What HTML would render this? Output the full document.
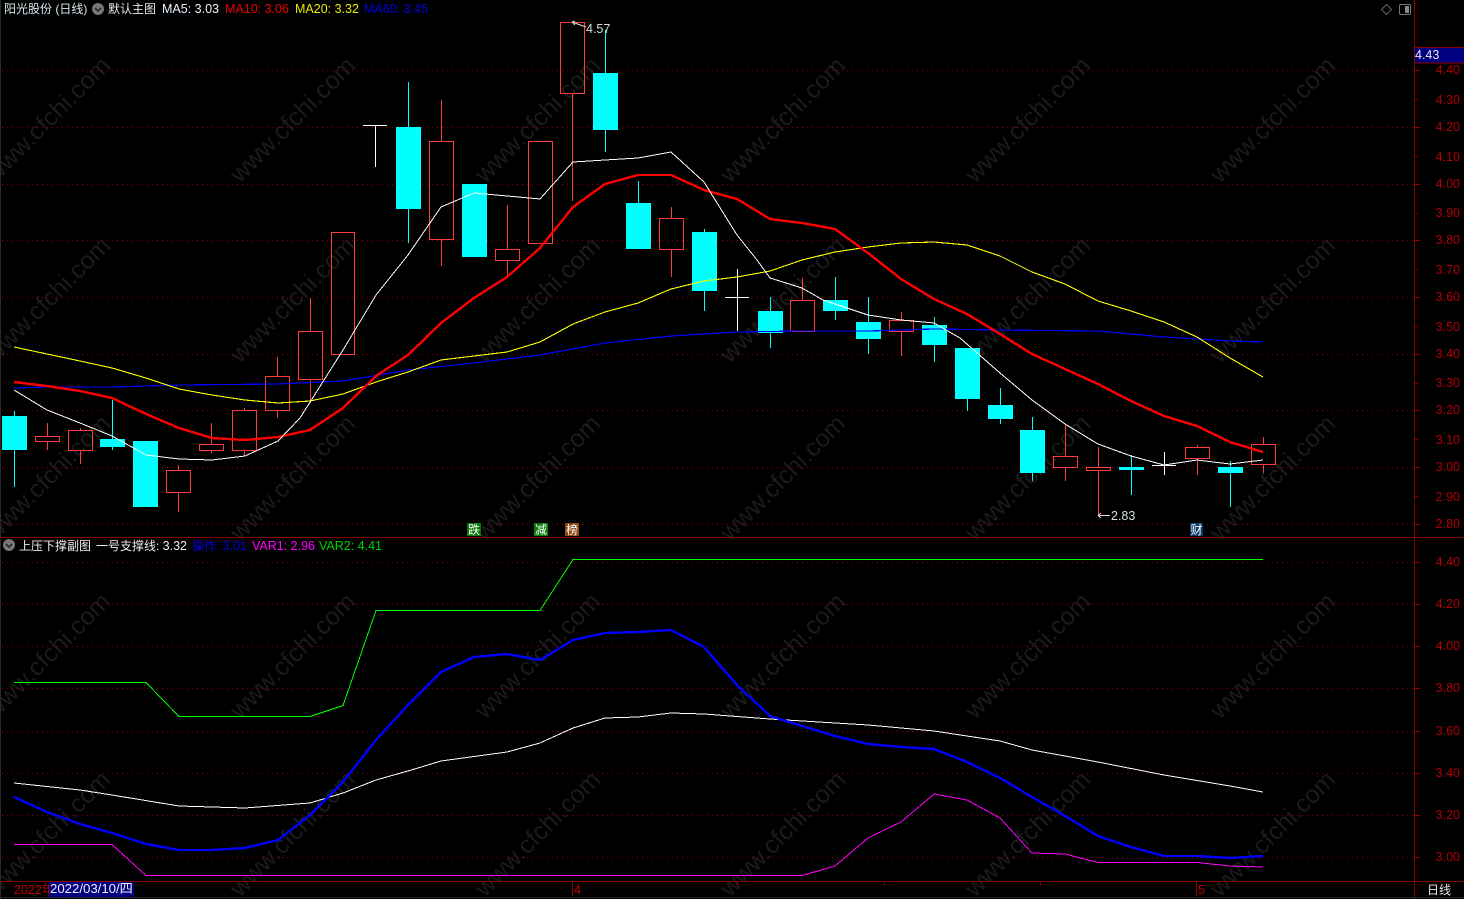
<!DOCTYPE html>
<html><head><meta charset="utf-8"><title>阳光股份</title>
<style>
html,body{margin:0;padding:0;background:#000;width:1464px;height:899px;overflow:hidden}
svg{display:block;font-family:"Liberation Sans","Noto Sans CJK SC",sans-serif;font-size:12.5px}
.wm text{font-size:25px;fill:#1b1b1b}
.r rect{fill:none;stroke:#ff3c3c;stroke-width:1}
.r line{stroke:#ff3c3c;stroke-width:1}
.c rect{fill:#0ff}
.c line{stroke:#0ff;stroke-width:1}
.g line{stroke:#8f0000;stroke-width:1;stroke-dasharray:1 4}
.ax text{fill:#b00000;text-anchor:end}
.ax line{stroke:#8f0000}
polyline{fill:none;stroke-linejoin:round;shape-rendering:crispEdges}
</style></head><body>
<svg width="1464" height="899" viewBox="0 0 1464 899" xmlns="http://www.w3.org/2000/svg">
<rect width="1464" height="899" fill="#000"/>
<g class="wm" transform="translate(-5,14)">
<text transform="translate(0,170) rotate(-45)">www.cfchi.com</text><text transform="translate(245,170) rotate(-45)">www.cfchi.com</text><text transform="translate(490,170) rotate(-45)">www.cfchi.com</text><text transform="translate(735,170) rotate(-45)">www.cfchi.com</text><text transform="translate(980,170) rotate(-45)">www.cfchi.com</text><text transform="translate(1225,170) rotate(-45)">www.cfchi.com</text>
<text transform="translate(0,350) rotate(-45)">www.cfchi.com</text><text transform="translate(245,350) rotate(-45)">www.cfchi.com</text><text transform="translate(490,350) rotate(-45)">www.cfchi.com</text><text transform="translate(735,350) rotate(-45)">www.cfchi.com</text><text transform="translate(980,350) rotate(-45)">www.cfchi.com</text><text transform="translate(1225,350) rotate(-45)">www.cfchi.com</text>
<text transform="translate(0,528) rotate(-45)">www.cfchi.com</text><text transform="translate(245,528) rotate(-45)">www.cfchi.com</text><text transform="translate(490,528) rotate(-45)">www.cfchi.com</text><text transform="translate(735,528) rotate(-45)">www.cfchi.com</text><text transform="translate(980,528) rotate(-45)">www.cfchi.com</text><text transform="translate(1225,528) rotate(-45)">www.cfchi.com</text>
<text transform="translate(0,706) rotate(-45)">www.cfchi.com</text><text transform="translate(245,706) rotate(-45)">www.cfchi.com</text><text transform="translate(490,706) rotate(-45)">www.cfchi.com</text><text transform="translate(735,706) rotate(-45)">www.cfchi.com</text><text transform="translate(980,706) rotate(-45)">www.cfchi.com</text><text transform="translate(1225,706) rotate(-45)">www.cfchi.com</text>
<text transform="translate(0,884) rotate(-45)">www.cfchi.com</text><text transform="translate(245,884) rotate(-45)">www.cfchi.com</text><text transform="translate(490,884) rotate(-45)">www.cfchi.com</text><text transform="translate(735,884) rotate(-45)">www.cfchi.com</text><text transform="translate(980,884) rotate(-45)">www.cfchi.com</text><text transform="translate(1225,884) rotate(-45)">www.cfchi.com</text>
</g>
<g class="g">
<line x1="2" x2="1414" y1="70.5" y2="70.5"/><line x1="2" x2="1414" y1="127.5" y2="127.5"/><line x1="2" x2="1414" y1="184.5" y2="184.5"/><line x1="2" x2="1414" y1="240.5" y2="240.5"/><line x1="2" x2="1414" y1="297.5" y2="297.5"/><line x1="2" x2="1414" y1="354.5" y2="354.5"/><line x1="2" x2="1414" y1="410.5" y2="410.5"/><line x1="2" x2="1414" y1="467.5" y2="467.5"/><line x1="2" x2="1414" y1="524.5" y2="524.5"/>
<line x1="2" x2="1414" y1="562.5" y2="562.5"/><line x1="2" x2="1414" y1="604.5" y2="604.5"/><line x1="2" x2="1414" y1="646.5" y2="646.5"/><line x1="2" x2="1414" y1="688.5" y2="688.5"/><line x1="2" x2="1414" y1="731.5" y2="731.5"/><line x1="2" x2="1414" y1="773.5" y2="773.5"/><line x1="2" x2="1414" y1="815.5" y2="815.5"/><line x1="2" x2="1414" y1="857.5" y2="857.5"/>
</g>
<g class="r">
<line x1="47.5" x2="47.5" y1="423" y2="436"/><line x1="47.5" x2="47.5" y1="441" y2="450"/><rect x="35.5" y="436.5" width="24" height="5"/>
<line x1="80.5" x2="80.5" y1="428" y2="430"/><line x1="80.5" x2="80.5" y1="450" y2="464"/><rect x="68.5" y="430.5" width="24" height="20"/>
<line x1="178.5" x2="178.5" y1="465" y2="470"/><line x1="178.5" x2="178.5" y1="492" y2="512"/><rect x="166.5" y="470.5" width="24" height="22"/>
<line x1="211.5" x2="211.5" y1="423" y2="444"/><line x1="211.5" x2="211.5" y1="451" y2="453"/><rect x="199.5" y="444.5" width="24" height="6"/>
<line x1="244.5" x2="244.5" y1="408" y2="410"/><line x1="244.5" x2="244.5" y1="451" y2="456"/><rect x="232.5" y="410.5" width="24" height="40"/>
<line x1="277.5" x2="277.5" y1="357" y2="376"/><line x1="277.5" x2="277.5" y1="410" y2="418"/><rect x="265.5" y="376.5" width="24" height="34"/>
<line x1="310.5" x2="310.5" y1="298" y2="331"/><line x1="310.5" x2="310.5" y1="379" y2="403"/><rect x="298.5" y="331.5" width="24" height="48"/>
<rect x="331.5" y="232.5" width="23" height="122"/>
<line x1="441.5" x2="441.5" y1="100" y2="141"/><line x1="441.5" x2="441.5" y1="240" y2="266"/><rect x="429.5" y="141.5" width="24" height="98"/>
<line x1="507.5" x2="507.5" y1="205" y2="249"/><line x1="507.5" x2="507.5" y1="261" y2="277"/><rect x="495.5" y="249.5" width="24" height="11"/>
<rect x="528.5" y="141.5" width="24" height="102"/>
<line x1="572.5" x2="572.5" y1="94" y2="201"/><rect x="560.5" y="22.5" width="24" height="71"/>
<line x1="671.5" x2="671.5" y1="207" y2="218"/><line x1="671.5" x2="671.5" y1="249" y2="277"/><rect x="659.5" y="218.5" width="24" height="31"/>
<line x1="802.5" x2="802.5" y1="278" y2="300"/><rect x="790.5" y="300.5" width="24" height="31"/>
<line x1="901.5" x2="901.5" y1="312" y2="320"/><line x1="901.5" x2="901.5" y1="331" y2="356"/><rect x="889.5" y="320.5" width="24" height="11"/>
<line x1="1065.5" x2="1065.5" y1="425" y2="456"/><line x1="1065.5" x2="1065.5" y1="467" y2="481"/><rect x="1053.5" y="456.5" width="24" height="11"/>
<line x1="1098.5" x2="1098.5" y1="447" y2="467"/><line x1="1098.5" x2="1098.5" y1="471" y2="516"/><rect x="1086.5" y="467.5" width="24" height="3"/>
<line x1="1197.5" x2="1197.5" y1="445" y2="447"/><line x1="1197.5" x2="1197.5" y1="458" y2="475"/><rect x="1185.5" y="447.5" width="24" height="11"/>
<line x1="1263.5" x2="1263.5" y1="437" y2="444"/><line x1="1263.5" x2="1263.5" y1="464" y2="473"/><rect x="1251.5" y="444.5" width="24" height="20"/>
</g>
<g class="c">
<line x1="14.5" x2="14.5" y1="411" y2="487"/><rect x="2" y="416" width="25" height="34"/>
<line x1="112.5" x2="112.5" y1="400" y2="450"/><rect x="100" y="439" width="25" height="8"/>
<rect x="133" y="441" width="25" height="66"/>
<line x1="408.5" x2="408.5" y1="82" y2="243"/><rect x="396" y="127" width="25" height="82"/>
<rect x="462" y="184" width="25" height="73"/>
<line x1="605.5" x2="605.5" y1="30" y2="152"/><rect x="593" y="73" width="25" height="57"/>
<line x1="638.5" x2="638.5" y1="181" y2="203"/><rect x="626" y="203" width="25" height="46"/>
<line x1="704.5" x2="704.5" y1="229" y2="311"/><rect x="692" y="232" width="25" height="59"/>
<line x1="770.5" x2="770.5" y1="297" y2="348"/><rect x="758" y="311" width="25" height="22"/>
<line x1="835.5" x2="835.5" y1="277" y2="320"/><rect x="823" y="300" width="25" height="11"/>
<line x1="868.5" x2="868.5" y1="297" y2="354"/><rect x="856" y="322" width="25" height="17"/>
<line x1="934.5" x2="934.5" y1="317" y2="362"/><rect x="922" y="325" width="25" height="20"/>
<line x1="967.5" x2="967.5" y1="348" y2="411"/><rect x="955" y="348" width="25" height="51"/>
<line x1="1000.5" x2="1000.5" y1="388" y2="424"/><rect x="988" y="405" width="25" height="14"/>
<line x1="1032.5" x2="1032.5" y1="417" y2="481"/><rect x="1020" y="430" width="25" height="43"/>
<line x1="1131.5" x2="1131.5" y1="455" y2="495"/><rect x="1119" y="467" width="25" height="3"/>
<line x1="1230.5" x2="1230.5" y1="461" y2="507"/><rect x="1218" y="467" width="25" height="6"/>
</g>
<g stroke="#fff" stroke-width="1">
<line x1="375.5" x2="375.5" y1="125" y2="167"/><line x1="363" x2="387" y1="125.5" y2="125.5"/>
<line x1="737.5" x2="737.5" y1="269" y2="331"/><line x1="725" x2="749" y1="297.5" y2="297.5"/>
<line x1="1164.5" x2="1164.5" y1="452" y2="475"/><line x1="1152" x2="1176" y1="465.5" y2="465.5"/>
</g>
<polyline stroke="#0000ff" stroke-width="1.2" points="14,388 47,387 112,387 179,385 278,384 343,381 408,370 474,363 540,355 605,343 671,336 737,332 802,331 868,331 934,329 1000,330 1098,331 1164,337 1230,341 1263,342"/>
<polyline stroke="#ffff00" stroke-width="1.1" points="14,347 47,354 80,361 112,368 146,378 179,389 212,395 245,400 278,403 310,401 343,394 376,382 408,372 441,360 474,356 507,352 540,342 573,324 605,312 638,303 671,289 704,281 737,277 770,271 802,260 835,252 868,247 901,243 934,242 967,245 1000,256 1032,272 1065,284 1098,301 1131,311 1164,322 1197,337 1230,358 1263,377"/>
<polyline stroke="#ff0000" stroke-width="2.4" points="14,382 47,386 80,391 112,398 146,414 179,428 212,438 245,440 278,437 310,430 343,408 376,376 408,355 441,323 474,298 507,277 540,248 573,207 605,184 638,175 671,175 704,190 737,199 770,219 802,223 835,229 868,253 901,279 934,299 967,314 1000,334 1032,354 1065,369 1098,384 1131,401 1164,416 1197,426 1230,442 1263,452"/>
<polyline stroke="#ffffff" stroke-width="1" points="14,390 47,410 80,423 112,436 146,455 179,459 212,460 245,456 278,441 300,418 343,350 376,295 408,255 441,207 474,193 507,196 540,199 573,162 605,160 638,158 671,152 704,182 737,235 757,260 770,278 802,288 823,300 868,315 901,320 934,323 960,338 1000,373 1032,400 1065,424 1098,444 1131,456 1164,465 1197,460 1230,464 1263,460"/>
<polyline stroke="#00ff00" stroke-width="1" points="14,682.5 146,682.5 179,716.5 310,716.5 343,705.5 376,610.5 540,610.5 573,559.5 1263,559.5"/>
<polyline stroke="#ffffff" stroke-width="1" points="14,783 80,790 112,795 179,806 245,808 310,803 343,793 376,780 408,771 441,761 507,752 540,743 573,728 605,718 638,717 671,713 704,714 770,719 868,725 934,731 1000,741 1032,750 1098,762 1164,775 1230,786 1263,792"/>
<polyline stroke="#ff00ff" stroke-width="1" points="14,844.5 112,844.5 146,875.5 802,875.5 835,866 868,838 901,822 934,794 967,800 1000,818 1032,853 1065,854 1098,862.5 1197,862.5 1230,866 1263,867"/>
<polyline stroke="#0000ff" stroke-width="2.4" points="14,797 47,812 80,824 112,833 146,844 179,850 212,850 245,848 278,840 310,815 343,782 376,740 408,705 441,672 474,657 507,654 540,660 573,640 605,633 638,632 671,630 704,647 737,685 770,716 802,726 835,736 868,744 901,747 934,749 967,762 1000,778 1032,797 1065,816 1098,836 1131,847 1164,856 1197,856 1230,858 1263,856"/>

<rect x="0" y="0" width="1" height="899" fill="#2a2a2a"/>
<line x1="0" x2="1464" y1="537.5" y2="537.5" stroke="#800000"/>
<line x1="0" x2="1464" y1="881.5" y2="881.5" stroke="#800000"/>
<line x1="1414.5" x2="1414.5" y1="0" y2="899" stroke="#8f0000" stroke-width="1"/>
<line x1="0" x2="1464" y1="897.5" y2="897.5" stroke="#262626"/>

<g class="ax">
<line x1="1415" x2="1420" y1="70.5" y2="70.5"/><line x1="1415" x2="1418" y1="99.5" y2="99.5"/><line x1="1415" x2="1420" y1="127.5" y2="127.5"/><line x1="1415" x2="1418" y1="156.5" y2="156.5"/><line x1="1415" x2="1420" y1="184.5" y2="184.5"/><line x1="1415" x2="1418" y1="213.5" y2="213.5"/><line x1="1415" x2="1420" y1="240.5" y2="240.5"/><line x1="1415" x2="1418" y1="269.5" y2="269.5"/><line x1="1415" x2="1420" y1="297.5" y2="297.5"/><line x1="1415" x2="1418" y1="326.5" y2="326.5"/><line x1="1415" x2="1420" y1="354.5" y2="354.5"/><line x1="1415" x2="1418" y1="383.5" y2="383.5"/><line x1="1415" x2="1420" y1="410.5" y2="410.5"/><line x1="1415" x2="1418" y1="439.5" y2="439.5"/><line x1="1415" x2="1420" y1="467.5" y2="467.5"/><line x1="1415" x2="1418" y1="496.5" y2="496.5"/><line x1="1415" x2="1420" y1="524.5" y2="524.5"/>
<line x1="1415" x2="1420" y1="562.5" y2="562.5"/><line x1="1415" x2="1420" y1="604.5" y2="604.5"/><line x1="1415" x2="1420" y1="646.5" y2="646.5"/><line x1="1415" x2="1420" y1="688.5" y2="688.5"/><line x1="1415" x2="1420" y1="731.5" y2="731.5"/><line x1="1415" x2="1420" y1="773.5" y2="773.5"/><line x1="1415" x2="1420" y1="815.5" y2="815.5"/><line x1="1415" x2="1420" y1="857.5" y2="857.5"/>
<text x="1460" y="74">4.40</text><text x="1460" y="104">4.30</text><text x="1460" y="131">4.20</text><text x="1460" y="161">4.10</text><text x="1460" y="188">4.00</text><text x="1460" y="217">3.90</text><text x="1460" y="244">3.80</text><text x="1460" y="274">3.70</text><text x="1460" y="301">3.60</text><text x="1460" y="331">3.50</text><text x="1460" y="358">3.40</text><text x="1460" y="387">3.30</text><text x="1460" y="414">3.20</text><text x="1460" y="444">3.10</text><text x="1460" y="471">3.00</text><text x="1460" y="501">2.90</text><text x="1460" y="528">2.80</text>
<text x="1460" y="566">4.40</text><text x="1460" y="608">4.20</text><text x="1460" y="650">4.00</text><text x="1460" y="692">3.80</text><text x="1460" y="735">3.60</text><text x="1460" y="777">3.40</text><text x="1460" y="819">3.20</text><text x="1460" y="861">3.00</text>
</g>
<rect x="1415" y="47" width="49" height="16" fill="#000080"/>
<line x1="1415" x2="1464" y1="47.5" y2="47.5" stroke="#8f0000"/><line x1="1415" x2="1464" y1="63" y2="63" stroke="#8f0000"/>
<text x="1415" y="59" fill="#e8e8e8">4.43</text>

<text x="4" y="13" fill="#d8e6ee" font-size="12">阳光股份 (日线)</text>
<circle cx="98" cy="9" r="6" fill="#777"/><path d="M95 8l3 3 3-3" fill="none" stroke="#222" stroke-width="1.5"/>
<text x="108" y="13" fill="#e8e8e8" font-size="12">默认主图</text>
<text x="162" y="13" fill="#e8f4ff">MA5: 3.03</text>
<text x="225" y="13" fill="#e80000">MA10: 3.06</text>
<text x="295" y="13" fill="#e8e800">MA20: 3.32</text>
<text x="364" y="13" fill="#0000e0">MA60: 3.45</text>
<path d="M1386.5 4.5l5 5-5 5-5-5z" fill="none" stroke="#666"/>
<rect x="1399.5" y="4.5" width="11" height="10" rx="1.5" fill="none" stroke="#777"/><rect x="1405" y="6" width="4" height="7" fill="#888"/>

<circle cx="9" cy="545" r="6" fill="#777"/><path d="M6 544l3 3 3-3" fill="none" stroke="#222" stroke-width="1.5"/>
<text x="19" y="550" fill="#eee" font-size="12">上压下撑副图</text>
<text x="96" y="550" fill="#eee" font-size="12">一号支撑线: <tspan font-size="12.5">3.32</tspan></text>
<text x="192" y="550" fill="#0000e0" font-size="12">操作: <tspan font-size="12.5">3.01</tspan></text>
<text x="252" y="550" fill="#ff00ff">VAR1: 2.96</text>
<text x="319" y="550" fill="#00d000">VAR2: 4.41</text>

<path d="M572 22l14 5M572 22l3 -1M572 22l3 3" stroke="#ddd" fill="none"/>
<text x="586" y="33" fill="#d5dde0">4.57</text>
<path d="M1098 515.5h12M1098 515.5l3-2.5M1098 515.5l3 2.5" stroke="#ddd" fill="none"/>
<text x="1111" y="520" fill="#d5dde0">2.83</text>

<rect x="467" y="523" width="14" height="13" fill="#0a7a0a"/><text x="468" y="534" fill="#fff" font-size="12">跌</text>
<rect x="534" y="523" width="14" height="13" fill="#0a7a0a"/><text x="535" y="534" fill="#fff" font-size="12">减</text>
<rect x="565" y="523" width="14" height="13" fill="#8b4513"/><text x="566" y="534" fill="#fff" font-size="12">榜</text>
<rect x="1190" y="523" width="13" height="13" fill="#0a3a6a"/><text x="1190.5" y="534" fill="#fff" font-size="12">财</text>

<text x="14" y="894" fill="#c00000">2022年</text>
<rect x="49" y="882" width="85" height="15" fill="#000080"/>
<text x="50" y="893" fill="#f0f0f0" font-size="13.2">2022/03/10/四</text>
<line x1="572.5" x2="572.5" y1="882" y2="896" stroke="#8f0000"/><text x="574" y="894" fill="#c00000">4</text>
<line x1="1196.5" x2="1196.5" y1="882" y2="896" stroke="#8f0000"/><text x="1198" y="894" fill="#c00000">5</text>
<line x1="737.5" x2="737.5" y1="882" y2="885" stroke="#8f0000"/><line x1="884.5" x2="884.5" y1="882" y2="885" stroke="#8f0000"/><line x1="1040.5" x2="1040.5" y1="882" y2="885" stroke="#8f0000"/>
<text x="1427" y="894" fill="#e8e8e8" font-size="12">日线</text>
</svg>
</body></html>
